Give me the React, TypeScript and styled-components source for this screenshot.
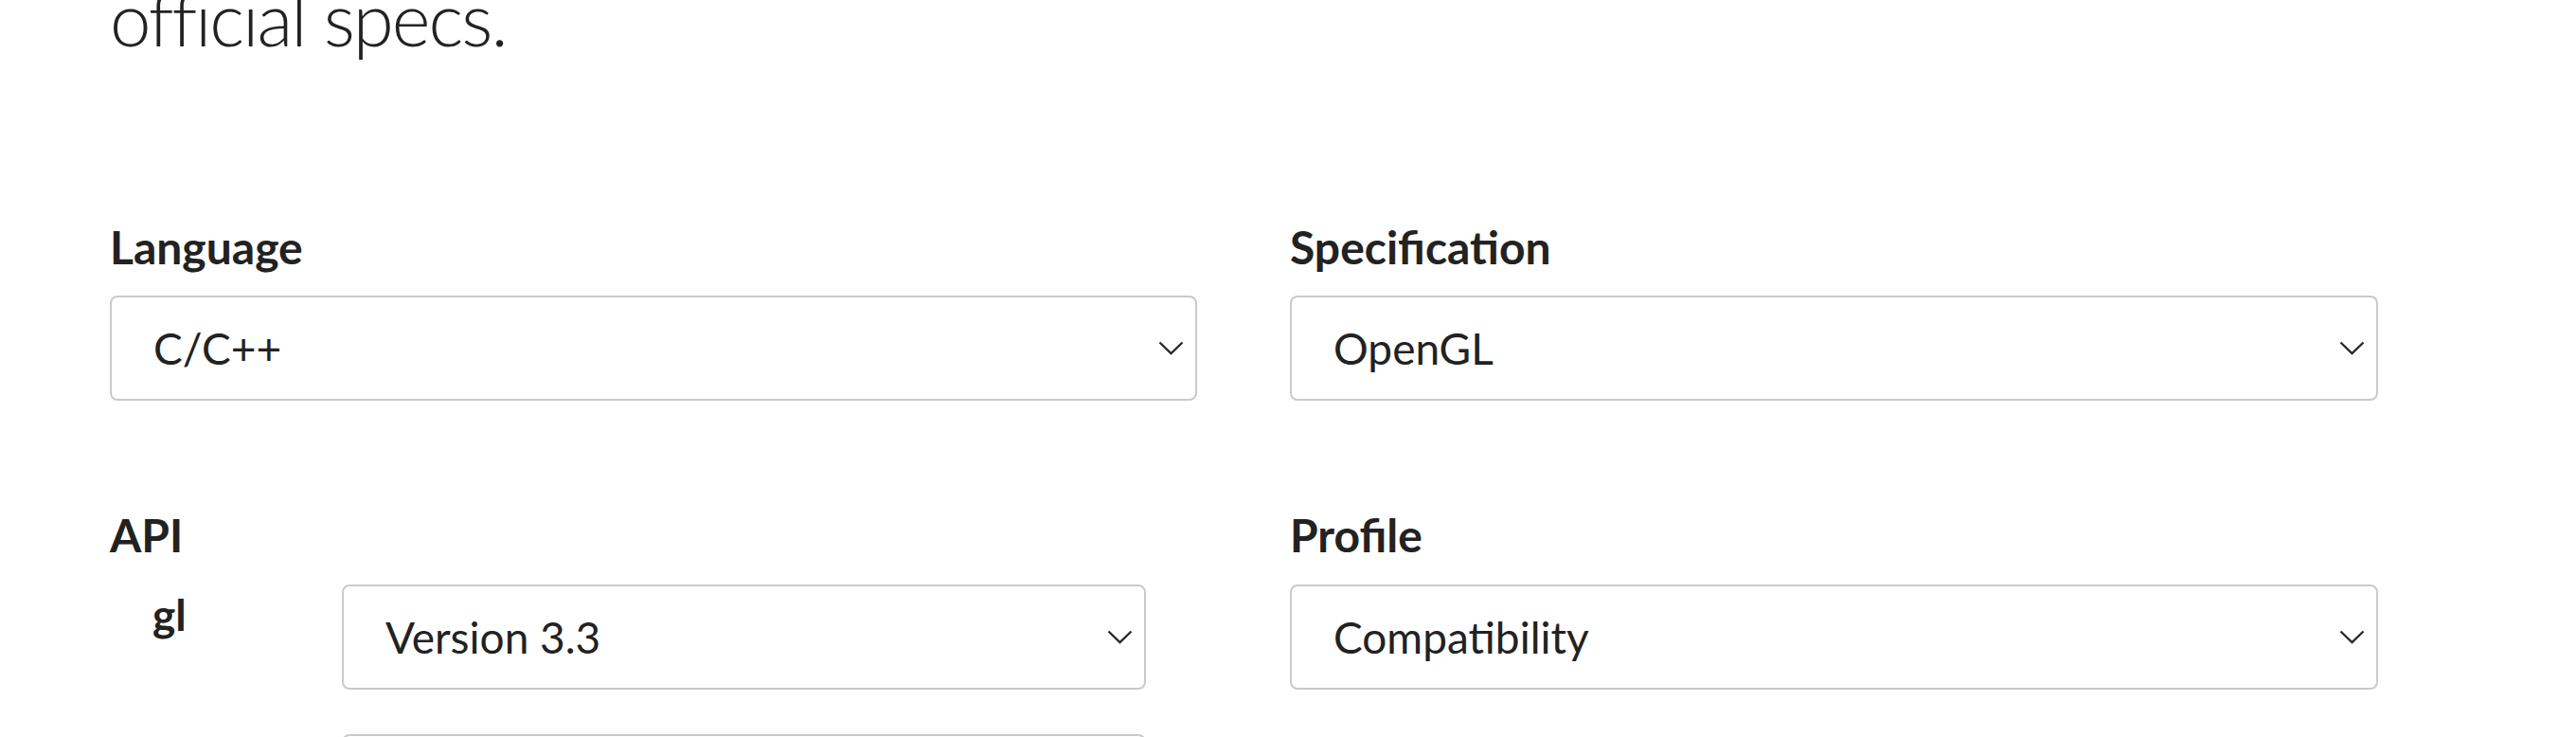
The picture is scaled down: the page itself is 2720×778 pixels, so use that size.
import React from "react";
import styled, { createGlobalStyle } from "styled-components";

const GlobalStyle = createGlobalStyle`
  html, body {
    margin: 0;
    padding: 0;
    background: #ffffff;
  }
  body {
    font-family: Lato, "Open Sans", "Liberation Sans", sans-serif;
    color: #222222;
    overflow: hidden;
  }
`;

const Page = styled.main`
  width: 2395px;
  padding-left: 116px;
`;

const Headline = styled.h1`
  margin: -27px 0 165px 0;
  font-size: 78px;
  line-height: 1.2;
  font-weight: 300;
  color: #222222;
  letter-spacing: -2px;
`;

const FormGrid = styled.div`
  display: grid;
  grid-template-columns: 1148px 1149px;
  column-gap: 98px;
  row-gap: 113px;
`;

const Field = styled.section`
  display: flex;
  flex-direction: column;
`;

const FieldLabel = styled.h3`
  margin: 0 0 23px 0;
  font-size: 48px;
  line-height: 1.2;
  font-weight: 700;
  color: #222222;
`;

const SelectBox = styled.div`
  box-sizing: border-box;
  height: 111px;
  display: flex;
  align-items: center;
  justify-content: space-between;
  padding: 0 12px 0 44px;
  border: 2px solid #cacaca;
  border-radius: 8px;
  background: #ffffff;
  font-size: 46px;
  font-weight: 400;
  color: #222222;
  cursor: pointer;
`;

const SelectText = styled.span`
  white-space: nowrap;
`;

const ApiList = styled.div`
  display: flex;
  flex-direction: column;
  gap: 47px;
  padding: 0 54px 0 45px;
`;

const ApiRow = styled.div`
  display: grid;
  grid-template-columns: 200px 1fr;
  align-items: start;
`;

const ApiName = styled.span`
  padding-top: 4px;
  font-size: 46px;
  line-height: 1.2;
  font-weight: 700;
  color: #222222;
`;

const Chevron = () => (
  <svg width="27" height="15" viewBox="0 0 27 15" fill="none">
    <polyline
      points="1.5,1.5 13.5,13 25.5,1.5"
      stroke="#2a2a2a"
      strokeWidth="2.4"
      strokeLinejoin="miter"
    />
  </svg>
);

const Select: React.FC<{ value: string }> = ({ value }) => (
  <SelectBox role="combobox" aria-expanded={false}>
    <SelectText>{value}</SelectText>
    <Chevron />
  </SelectBox>
);

const apis = [
  { name: "gl", value: "Version 3.3" },
  { name: "gles1", value: "None" },
];

export default function App() {
  return (
    <>
      <GlobalStyle />
      <Page>
        <Headline>official specs.</Headline>
        <FormGrid>
          <Field>
            <FieldLabel>Language</FieldLabel>
            <Select value="C/C++" />
          </Field>
          <Field>
            <FieldLabel>Specification</FieldLabel>
            <Select value="OpenGL" />
          </Field>
          <Field>
            <FieldLabel>API</FieldLabel>
            <ApiList>
              {apis.map((a) => (
                <ApiRow key={a.name}>
                  <ApiName>{a.name}</ApiName>
                  <Select value={a.value} />
                </ApiRow>
              ))}
            </ApiList>
          </Field>
          <Field>
            <FieldLabel>Profile</FieldLabel>
            <Select value="Compatibility" />
          </Field>
        </FormGrid>
      </Page>
    </>
  );
}
